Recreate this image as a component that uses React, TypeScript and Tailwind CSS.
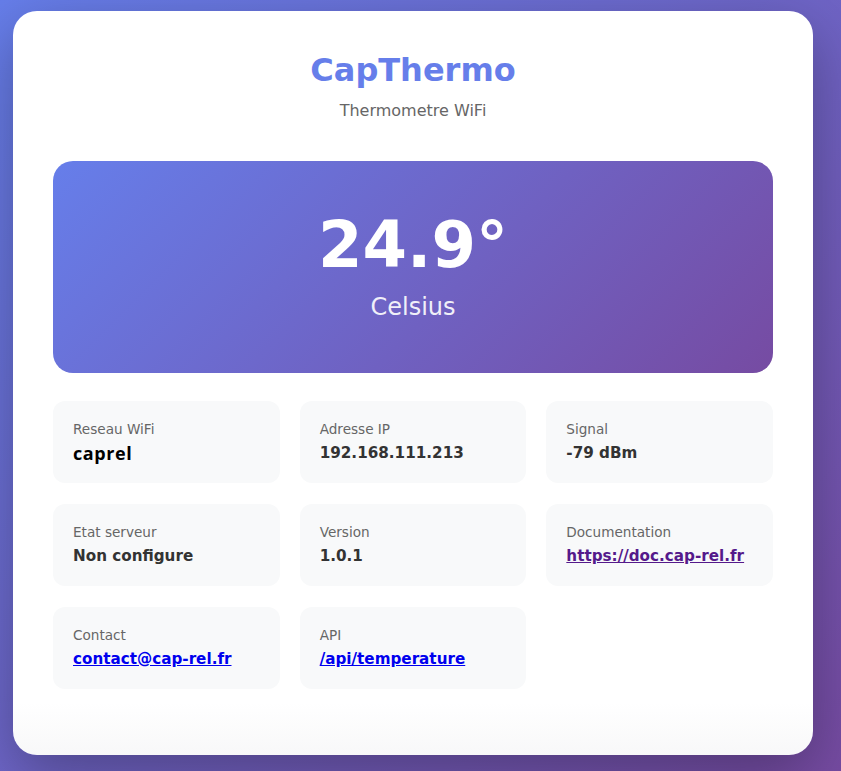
const items: { label: string; value: string; kind?: "wifi" | "link" | "visited"; }[] = [
  { label: "Reseau WiFi", value: "caprel", kind: "wifi" },
  { label: "Adresse IP", value: "192.168.111.213" },
  { label: "Signal", value: "-79 dBm" },
  { label: "Etat serveur", value: "Non configure" },
  { label: "Version", value: "1.0.1" },
  { label: "Documentation", value: "https://doc.cap-rel.fr", kind: "visited" },
  { label: "Contact", value: "contact@cap-rel.fr", kind: "link" },
  { label: "API", value: "/api/temperature", kind: "link" },
];

function InfoCard({ label, value, kind }: { label: string; value: string; kind?: string }) {
  return (
    <div className="rounded-[12px] bg-[#f8f9fa] p-5">
      <div className="mb-[5px] text-[13.6px] leading-[17px] text-[#666]">{label}</div>
      {kind === "wifi" ? (
        <div className="font-['Open_Sans',sans-serif] text-[18px] font-bold leading-[20px] tracking-[0.6px] text-black">
          {value}
        </div>
      ) : kind === "link" || kind === "visited" ? (
        <div className="text-[15.2px] font-bold leading-[20px]">
          <a
            href="#"
            className={"underline " + (kind === "visited" ? "text-[#551a8b]" : "text-[#0000ee]")}
          >
            {value}
          </a>
        </div>
      ) : (
        <div className="text-[15.2px] font-bold leading-[20px] text-[#333]">{value}</div>
      )}
    </div>
  );
}

export default function App() {
  return (
    <div className="h-[771px] overflow-hidden bg-[linear-gradient(135deg,#667eea_0%,#764ba2_100%)] pl-[13px] pt-[11px] font-['DejaVu_Sans',sans-serif]">
      <div className="h-[744px] w-[800px] rounded-[24px] bg-[linear-gradient(to_bottom,#ffffff_93%,#f8f8f9_100%)] px-10 pt-10 shadow-[0_20px_60px_rgba(0,0,0,0.3)]">
        {/* Header */}
        <h1 className="text-center text-[32px] font-bold leading-[38px] text-[#667eea]">CapThermo</h1>
        <p className="mt-[10px] text-center text-[16px] leading-[24px] text-[#666]">Thermometre WiFi</p>

        {/* Temperature */}
        <div className="mt-[38px] flex h-[212px] flex-col items-center rounded-[20px] bg-[linear-gradient(135deg,#667eea_0%,#764ba2_100%)] pt-10 text-white">
          <div className="text-[64px] font-bold leading-[88px]">24.9°</div>
          <div className="text-[24px] leading-[36px] opacity-90">Celsius</div>
        </div>

        {/* Infos */}
        <div className="mt-[28px] grid grid-cols-3 gap-x-5 gap-y-[21px]">
          {items.map((it) => (
            <InfoCard key={it.label} {...it} />
          ))}
        </div>
      </div>
    </div>
  );
}
